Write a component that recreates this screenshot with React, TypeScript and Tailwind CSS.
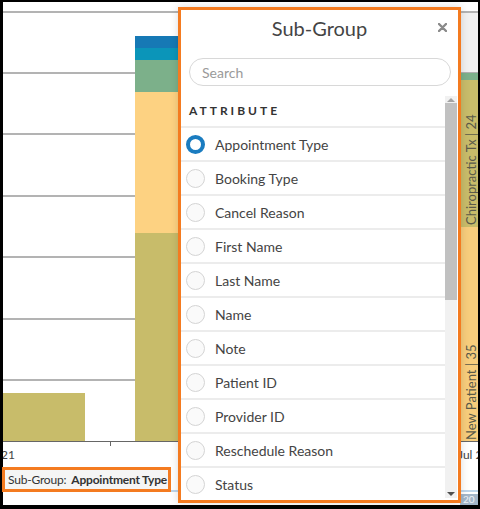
import React from 'react';

const ATTRS = [
  'Appointment Type',
  'Booking Type',
  'Cancel Reason',
  'First Name',
  'Last Name',
  'Name',
  'Note',
  'Patient ID',
  'Provider ID',
  'Reschedule Reason',
  'Status',
];

const GRID = [12, 73, 134, 196, 257, 319, 380];

function Chart() {
  return (
    <svg className="absolute inset-0" width={480} height={509} viewBox="0 0 480 509">
      <rect x={461} y={13} width={17} height={60} fill="#f1f1f1" />
      {GRID.map((y) => (
        <line key={y} x1={0} x2={480} y1={y} y2={y} stroke="#9a9a9a" strokeWidth={1.5} />
      ))}
      {/* left bar */}
      <rect x={3} y={393} width={82} height={48} fill="#c8bc6a" />
      {/* middle stacked bar */}
      <rect x={135} y={36} width={45} height={12} fill="#1679b5" />
      <rect x={135} y={48} width={45} height={12} fill="#0b95b9" />
      <rect x={135} y={60} width={45} height={32} fill="#7cb08a" />
      <rect x={135} y={92} width={45} height={141} fill="#fdd282" />
      <rect x={135} y={233} width={45} height={208} fill="#c8bc6a" />
      {/* right bar */}
      <rect x={461} y={73} width={17} height={7} fill="#7cb08a" />
      <rect x={461} y={80} width={17} height={147} fill="#c8bc6a" />
      <rect x={461} y={227} width={17} height={214} fill="#f7cd7c" />
      <text
        transform="translate(476 225) rotate(-90)"
        fontFamily="Lato, sans-serif"
        fontSize={13}
        fill="#5a5a4a"
      >
        Chiropractic Tx | 24
      </text>
      <text
        transform="translate(476 440) rotate(-90)"
        fontFamily="Lato, sans-serif"
        fontSize={13}
        fill="#5a5a4a"
      >
        New Patient | 35
      </text>
      {/* x axis */}
      <line x1={0} x2={480} y1={441.5} y2={441.5} stroke="#666" strokeWidth={1} />
      <line x1={110.5} x2={110.5} y1={441} y2={446} stroke="#666" strokeWidth={1} />
      <text x={1} y={459} fontFamily="Lato, sans-serif" fontSize={12} fill="#444">
        21
      </text>
      <text x={458} y={459} fontFamily="Lato, sans-serif" fontSize={12} fill="#444">
        Jul 2
      </text>
      {/* navigator */}
      <line x1={170} x2={480} y1={491} y2={491} stroke="#a9c9e4" strokeWidth={1.5} />
      <rect x={460} y={494} width={18} height={11} fill="#a3b6c9" />
      <text x={463} y={503} fontFamily="Lato, sans-serif" fontSize={10} fill="#eef3f8">
        20
      </text>
      {/* frame */}
      <rect x={0} y={0} width={480} height={2} fill="#000" />
      <rect x={0} y={0} width={3} height={509} fill="#000" />
      <rect x={478} y={0} width={2} height={509} fill="#000" />
      <rect x={0} y={505} width={480} height={4} fill="#000" />
    </svg>
  );
}

function Radio({ checked }: { checked: boolean }) {
  return checked ? (
    <span className="h-[19px] w-[19px] shrink-0 rounded-full border-[4px] border-[#1a7cc0] bg-white" />
  ) : (
    <span className="h-[19px] w-[19px] shrink-0 rounded-full border-[1.5px] border-[#d4d4d4] bg-[#fafafa]" />
  );
}

function SubGroupPanel() {
  return (
    <div className="absolute left-[178px] top-[7px] flex h-[496px] w-[283px] flex-col border-[3px] border-[#f47b20] bg-white shadow-[0_0_8px_rgba(0,0,0,0.15)]">
      <div className="relative flex h-[39px] shrink-0 items-center justify-center pb-[3px]">
        <span className="text-[20px] text-[#444]">Sub-Group</span>
        <svg className="absolute right-[11px] top-[13px]" width={9} height={9} viewBox="0 0 9 9">
          <path d="M1 1L8 8M8 1L1 8" stroke="#8a8a8a" strokeWidth={2.4} strokeLinecap="round" />
        </svg>
      </div>
      <div className="ml-[8px] mr-[7px] mt-[9px] flex h-[28px] shrink-0 items-center rounded-full border border-[#d8d8d8] px-[12px] text-[14px] text-[#9a9a9a]">
        Search
      </div>
      <div className="mt-[10px] flex min-h-0 flex-1 pb-[2px]">
        <div className="min-w-0 flex-1 overflow-hidden">
          <div className="flex h-[30px] items-center pl-[8px] text-[12px] font-bold tracking-[3px] text-[#333]">
            ATTRIBUTE
          </div>
          {ATTRS.map((a, i) => (
            <div
              key={a}
              className="flex h-[34px] items-center gap-[10px] border-t-2 border-[#ececec] pl-[5px] text-[14px] text-[#444]"
            >
              <Radio checked={i === 0} />
              <span>{a}</span>
            </div>
          ))}
        </div>
        <div className="mr-[1px] flex w-[12px] shrink-0 flex-col bg-[#f1f1f1]">
          <div className="flex h-[7px] items-center justify-center">
            <span className="h-0 w-0 border-x-[4px] border-b-[4px] border-x-transparent border-b-[#a3a3a3]" />
          </div>
          <div className="h-[197px] bg-[#c1c1c1]" />
          <div className="flex-1" />
          <div className="flex h-[9px] items-center justify-center">
            <span className="h-0 w-0 border-x-[4px] border-t-[4px] border-x-transparent border-t-[#505050]" />
          </div>
        </div>
      </div>
    </div>
  );
}

export default function App() {
  return (
    <div className="relative h-[509px] w-[480px] overflow-hidden bg-white font-['Lato',sans-serif]">
      <Chart />
      <div className="absolute left-[2px] top-[467px] flex h-[25px] w-[169px] items-center gap-[5px] whitespace-nowrap border-[3px] border-[#f47b20] bg-[#f5f5f5] px-[3px] text-[12px] tracking-[-0.2px] text-[#333]">
        <span>Sub-Group:</span>
        <span className="font-bold">Appointment Type</span>
      </div>
      <SubGroupPanel />
    </div>
  );
}
